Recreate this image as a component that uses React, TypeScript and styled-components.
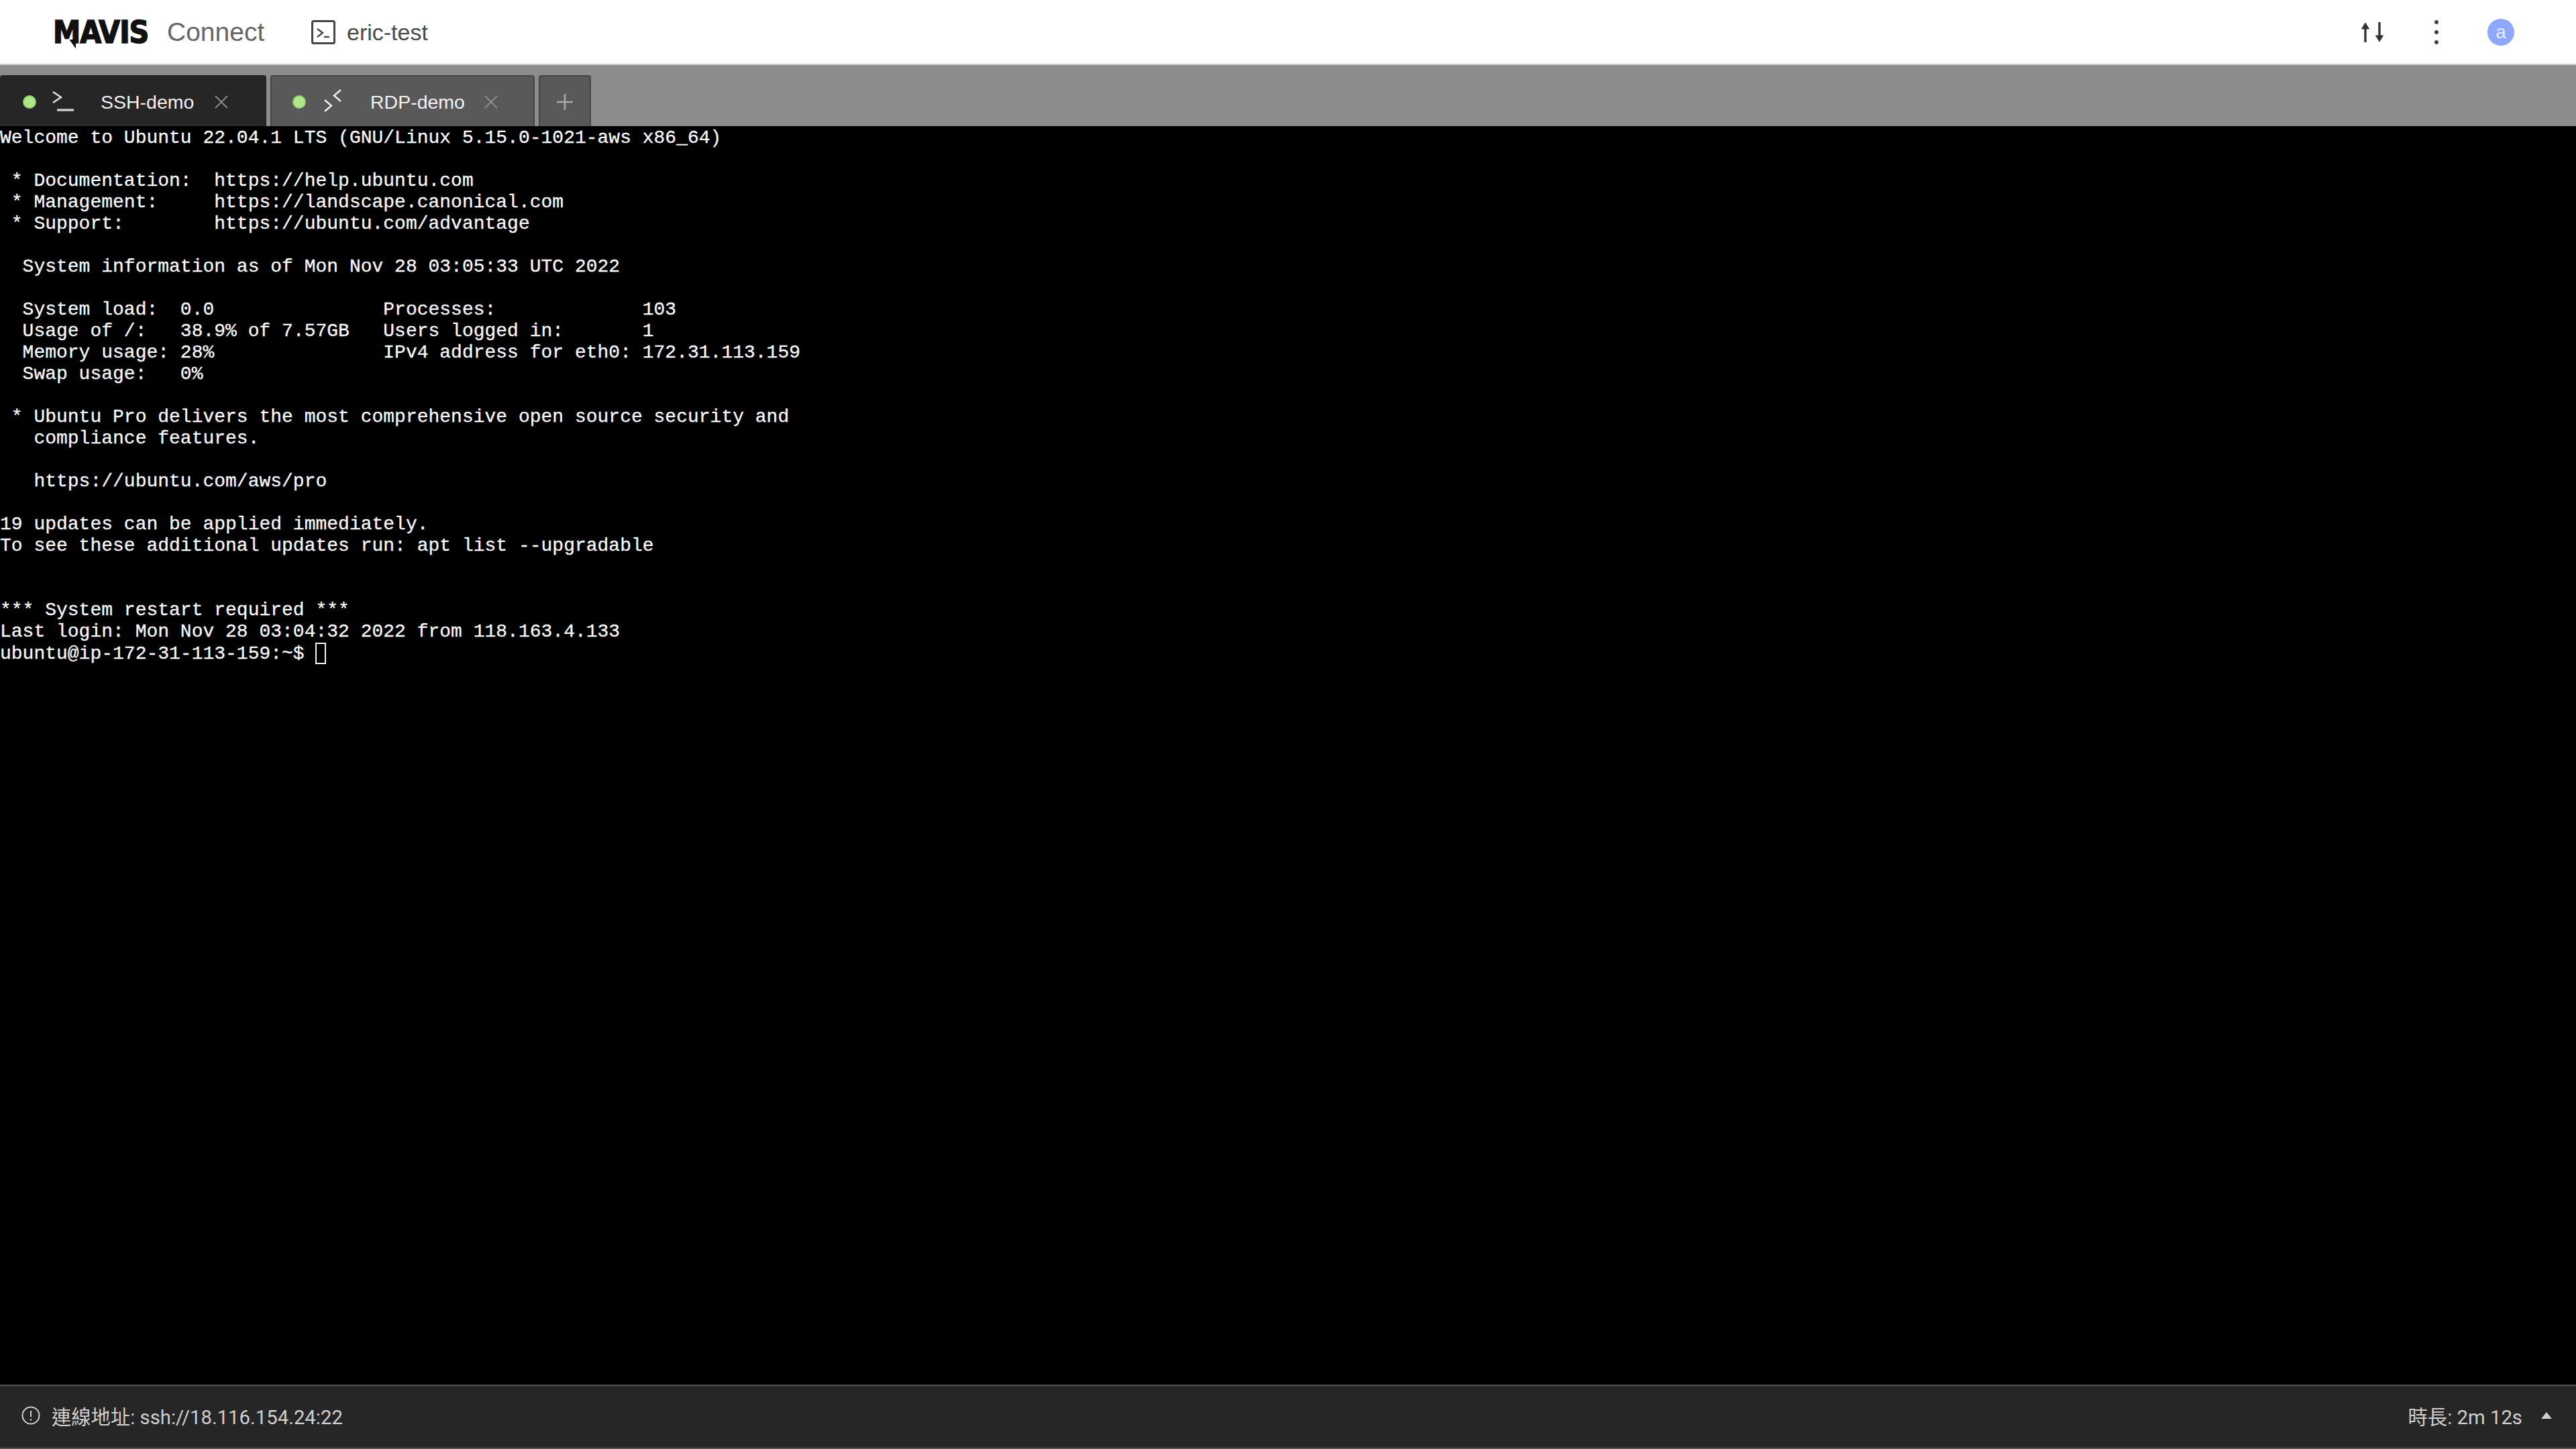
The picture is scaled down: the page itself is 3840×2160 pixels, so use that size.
// App.tsx
import React from 'react'
import styled, { createGlobalStyle } from 'styled-components'

const SANS = `Roboto, 'Noto Sans CJK TC', sans-serif`
const ARIAL = `'Liberation Sans', 'Noto Sans CJK TC', sans-serif`

const GlobalStyle = createGlobalStyle`
  html, body { margin: 0; padding: 0; background: #000; }
  * { box-sizing: border-box; }
`

const Page = styled.div`
  width: 3840px;
  height: 2160px;
  display: flex;
  flex-direction: column;
  overflow: hidden;
`

// ── top bar ─────────────────────────────────
const TopBar = styled.header`
  height: 97px;
  flex-shrink: 0;
  background: #fff;
  border-bottom: 2px solid #cfcfcf;
  padding: 0 92px 0 79px;
  display: flex;
  align-items: center;
`

const LogoMark = styled.span`
  position: relative;
  font-family: 'DejaVu Sans Condensed', 'DejaVu Sans', sans-serif;
  font-weight: 900;
  font-size: 46px;
  line-height: 1;
  letter-spacing: -1px;
  color: #111;
  -webkit-text-stroke: 1.5px #111;
  width: 170px;

  /* the tail under the M */
  &::after {
    content: '';
    position: absolute;
    left: 24px;
    top: 34px;
    width: 10px;
    height: 14px;
    background: #111;
    clip-path: polygon(0 0, 100% 0, 100% 100%);
  }
`

const Product = styled.span`
  font-family: ${ARIAL};
  font-size: 39px;
  color: #666;
  line-height: 1;
  width: 215px;
`

const HostIcon = styled.svg`
  width: 36px;
  height: 36px;
  margin-right: 17px;
  flex-shrink: 0;
`

const HostName = styled.span`
  font-family: ${ARIAL};
  font-size: 34px;
  color: #4a4a4a;
  line-height: 1;
`

const Spacer = styled.div`
  flex: 1;
`

const ActionIcon = styled.svg<{ $gap: number }>`
  display: block;
  flex-shrink: 0;
  margin-right: ${({ $gap }) => $gap}px;
`

const Avatar = styled.div`
  width: 40px;
  height: 40px;
  border-radius: 50%;
  background: #8ea8fb;
  color: #e6ecff;
  font-family: ${ARIAL};
  font-size: 28px;
  display: flex;
  align-items: center;
  justify-content: center;
  line-height: 1;
`

// ── tab strip ───────────────────────────────
const TabStrip = styled.nav`
  height: 91px;
  flex-shrink: 0;
  background: #8c8c8c;
  padding-top: 15px;
  display: flex;
  gap: 6px;
`

const Tab = styled.div<{ $active?: boolean }>`
  width: ${({ $active }) => ($active ? 397 : 394)}px;
  display: flex;
  align-items: center;
  padding-top: 2px;
  padding-left: ${({ $active }) => ($active ? 32 : 31)}px;
  background: ${({ $active }) => ($active ? '#262626' : '#595959')};
  border: 2px solid ${({ $active }) => ($active ? '#262626' : '#454545')};
  border-bottom: none;
  border-radius: 4px 4px 0 0;
`

const StatusDot = styled.span`
  width: 20px;
  height: 20px;
  border-radius: 50%;
  background: #b2e68d;
  border: 2px solid #8fd468;
  flex-shrink: 0;
  margin-right: 24px;
`

const TabIcon = styled.svg`
  width: 34px;
  height: 36px;
  flex-shrink: 0;
  margin-right: 38px;
  margin-top: -4px;
`

const TabLabel = styled.span`
  font-family: ${ARIAL};
  font-size: 28.5px;
  color: #f2f2f2;
  line-height: 1;
  width: 170px;
`

const CloseIcon = styled.svg`
  width: 20px;
  height: 20px;
  flex-shrink: 0;
`

const AddTab = styled.div`
  width: 78px;
  display: flex;
  align-items: center;
  justify-content: center;
  padding-top: 2px;
  background: #595959;
  border: 2px solid #454545;
  border-bottom: none;
  border-radius: 4px 4px 0 0;
`

const PlusIcon = styled.svg`
  width: 24px;
  height: 24px;
`

// ── terminal ────────────────────────────────
const Terminal = styled.pre`
  flex: 1;
  min-height: 0;
  margin: 0;
  padding-top: 2px;
  background: #000;
  color: #f8f8f8;
  font-family: 'Liberation Mono', monospace;
  font-size: 28px;
  line-height: 32px;
  -webkit-text-stroke: 0.3px #f8f8f8;
  overflow: hidden;
`

const Cursor = styled.span`
  display: inline-block;
  width: 16px;
  height: 32px;
  border: 2px solid #f4f4f4;
  vertical-align: -8px;
`

// ── status bar ──────────────────────────────
const StatusBar = styled.footer`
  height: 96px;
  flex-shrink: 0;
  background: #262626;
  border-top: 2px solid #555;
  border-bottom: 2px solid #555;
  padding: 0 36px 4px 32px;
  display: flex;
  align-items: center;
  font-family: ${SANS};
  font-size: 29.3px;
  color: #cfcfcf;
`

const InfoIcon = styled.svg`
  width: 28px;
  height: 28px;
  margin-right: 17px;
  flex-shrink: 0;
`

const Caret = styled.span`
  width: 0;
  height: 0;
  margin-left: 28px;
  border-left: 8px solid transparent;
  border-right: 8px solid transparent;
  border-bottom: 10px solid #cfcfcf;
`

const terminalText = `Welcome to Ubuntu 22.04.1 LTS (GNU/Linux 5.15.0-1021-aws x86_64)

 * Documentation:  https://help.ubuntu.com
 * Management:     https://landscape.canonical.com
 * Support:        https://ubuntu.com/advantage

  System information as of Mon Nov 28 03:05:33 UTC 2022

  System load:  0.0               Processes:             103
  Usage of /:   38.9% of 7.57GB   Users logged in:       1
  Memory usage: 28%               IPv4 address for eth0: 172.31.113.159
  Swap usage:   0%

 * Ubuntu Pro delivers the most comprehensive open source security and
   compliance features.

   https://ubuntu.com/aws/pro

19 updates can be applied immediately.
To see these additional updates run: apt list --upgradable


*** System restart required ***
Last login: Mon Nov 28 03:04:32 2022 from 118.163.4.133
ubuntu@ip-172-31-113-159:~$ `

function SshGlyph() {
  return (
    <TabIcon viewBox="0 0 34 36" fill="none" stroke="#e6e6e6" strokeWidth="2.4">
      <path d="M1 5 L13 13 L1 21" />
      <path d="M7 32 H32" strokeWidth="3.4" stroke="#cfcfcf" />
    </TabIcon>
  )
}

function RdpGlyph() {
  return (
    <TabIcon viewBox="0 0 34 36" fill="none" stroke="#f2f2f2" strokeWidth="2.4">
      <path d="M4 17 L14 25.5 L4 34" />
      <path d="M28 2 L18 10.5 L28 19" />
    </TabIcon>
  )
}

function Close() {
  return (
    <CloseIcon viewBox="0 0 20 20" fill="none" stroke="#8f8f8f" strokeWidth="1.8">
      <path d="M1 1 L19 19 M19 1 L1 19" />
    </CloseIcon>
  )
}

export default function App() {
  return (
    <Page>
      <GlobalStyle />
      <TopBar>
        <LogoMark>MAVIS</LogoMark>
        <Product>Connect</Product>
        <HostIcon viewBox="0 0 36 36" fill="none" stroke="#444" strokeWidth="3">
          <rect x="1.5" y="1.5" width="33" height="33" rx="2" />
          <path d="M9 13 L17 19 L9 25" strokeWidth="2.4" />
          <path d="M19 25 H27" strokeWidth="2.4" />
        </HostIcon>
        <HostName>eric-test</HostName>
        <Spacer />
        <ActionIcon $gap={74} width="34" height="30" viewBox="0 0 34 30" fill="none" stroke="#333" strokeWidth="3.4">
          <path d="M6 30 V4" />
          <path d="M0.5 10 L6 1 L11.5 10 Z" fill="#333" strokeWidth="1" />
          <path d="M27 0 V26" />
          <path d="M21.5 20 L27 29 L32.5 20 Z" fill="#333" strokeWidth="1" />
        </ActionIcon>
        <ActionIcon $gap={72} width="8" height="38" viewBox="0 0 8 38" fill="#444">
          <circle cx="4" cy="4" r="3" />
          <circle cx="4" cy="19" r="3" />
          <circle cx="4" cy="34" r="3" />
        </ActionIcon>
        <Avatar>a</Avatar>
      </TopBar>

      <TabStrip>
        <Tab $active>
          <StatusDot />
          <SshGlyph />
          <TabLabel>SSH-demo</TabLabel>
          <Close />
        </Tab>
        <Tab>
          <StatusDot />
          <RdpGlyph />
          <TabLabel>RDP-demo</TabLabel>
          <Close />
        </Tab>
        <AddTab>
          <PlusIcon viewBox="0 0 24 24" stroke="#a8a8a8" strokeWidth="2.6">
            <path d="M12 0 V24 M0 12 H24" />
          </PlusIcon>
        </AddTab>
      </TabStrip>

      <Terminal>
        {terminalText}
        <Cursor />
      </Terminal>

      <StatusBar>
        <InfoIcon viewBox="0 0 28 28" fill="none" stroke="#cfcfcf" strokeWidth="2">
          <circle cx="14" cy="14" r="12.5" />
          <path d="M14 7 V16 M14 19 V21.5" />
        </InfoIcon>
        <span>連線地址: ssh://18.116.154.24:22</span>
        <Spacer />
        <span>時長: 2m 12s</span>
        <Caret />
      </StatusBar>
    </Page>
  )
}
